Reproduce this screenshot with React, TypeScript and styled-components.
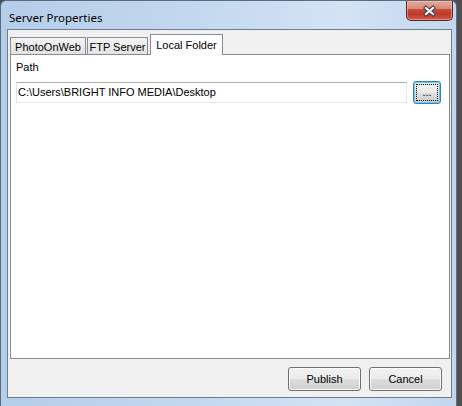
import React from "react";
import styled, { createGlobalStyle } from "styled-components";

const GlobalStyle = createGlobalStyle`
  html, body { margin: 0; padding: 0; }
  body {
    background: #4e4f52;
    overflow: hidden;
    font-family: "Liberation Sans", Arial, sans-serif;
  }
  * { box-sizing: border-box; }
`;

const Window = styled.div`
  width: 457px;
  height: 406px;
  border: 1px solid #5d6b7b;
  border-bottom: none;
  border-radius: 6px 6px 0 0;
  background: linear-gradient(to right, #b4cde8 0%, #c4d9ef 45%, #d3e3f4 75%, #c2d7ee 100%);
  padding: 0 4px 8px 6px;
  display: flex;
  flex-direction: column;
`;

const TitleBar = styled.div`
  height: 28px;
  display: flex;
  align-items: flex-start;
  padding-left: 2px;
  margin-right: -1px;
`;

const TitleText = styled.div`
  font-family: "Noto Sans", "Open Sans", sans-serif;
  font-size: 11.5px;
  line-height: 16px;
  padding-top: 9px;
  color: #000;
  flex: 1;
`;

const CloseButton = styled.div`
  width: 47px;
  height: 20px;
  border: 1px solid #4d2a2a;
  border-top: none;
  border-radius: 0 0 5px 5px;
  background: linear-gradient(#e6a897 0%, #d88a78 40%, #c5493a 45%, #c0392b 70%, #d35a45 100%);
  box-shadow: inset 0 0 0 1px rgba(255, 210, 200, 0.45);
  display: flex;
  align-items: center;
  justify-content: center;
`;

const Client = styled.div`
  flex: 1;
  background: #f0f0f0;
  border: 1px solid #6d7c8e;
  display: flex;
  flex-direction: column;
  padding: 4px 1px 6px 2px;
`;

const TabStrip = styled.div`
  height: 20px;
  display: flex;
  align-items: flex-end;
  position: relative;
  z-index: 1;
`;

const Tab = styled.div<{ $w: number; $active?: boolean; $gap: number }>`
  width: ${(p) => p.$w}px;
  margin-left: ${(p) => p.$gap}px;
  height: ${(p) => (p.$active ? 21 : 17)}px;
  margin-bottom: ${(p) => (p.$active ? -1 : 0)}px;
  border: 1px solid #898c95;
  border-bottom: none;
  background: ${(p) =>
    p.$active ? "#ffffff" : "linear-gradient(#f3f3f3 0%, #ebebeb 50%, #e3e3e3 100%)"};
  font-size: 11px;
  line-height: 13px;
  color: #000;
  padding-top: ${(p) => (p.$active ? 4 : 3)}px;
  text-align: center;
  white-space: nowrap;
`;

const Panel = styled.div`
  flex: 1;
  background: #fff;
  border: 1px solid #898c95;
  display: flex;
  flex-direction: column;
  gap: 7px;
  padding: 6px 8px 0 5px;
`;

const Label = styled.div`
  font-size: 11px;
  line-height: 13px;
  color: #000;
`;

const Row = styled.div`
  display: flex;
  align-items: center;
  gap: 6px;
`;

const PathInput = styled.div`
  flex: 1;
  height: 21px;
  border: 1px solid #e3e9ef;
  border-top-color: #abadb3;
  border-left-color: #e2e3ea;
  background: #fff;
  font-size: 11px;
  line-height: 19px;
  padding-left: 1px;
  color: #000;
  white-space: nowrap;
`;

const Button = styled.div<{ $w: number; $h: number; $focused?: boolean }>`
  width: ${(p) => p.$w}px;
  height: ${(p) => p.$h}px;
  border: 1px solid ${(p) => (p.$focused ? "#3c7fb1" : "#707070")};
  border-radius: 3px;
  background: linear-gradient(#f2f2f2 0%, #ebebeb 50%, #dddddd 51%, #cfcfcf 100%);
  box-shadow: inset 0 0 0 1px ${(p) => (p.$focused ? "#5ecdf7" : "#fbfbfb")};
  font-size: 11px;
  color: #000;
  display: flex;
  align-items: center;
  justify-content: center;
  padding: 2px;
`;

const FocusRect = styled.div`
  width: 100%;
  height: 100%;
  border: 1px dotted #000;
  display: flex;
  align-items: center;
  justify-content: center;
  font-size: 11px;
  line-height: 11px;
  padding-bottom: 1px;
`;

const Footer = styled.div`
  display: flex;
  justify-content: flex-end;
  gap: 8px;
  padding: 8px 8px 0 0;
`;

const tabs = [
  { label: "PhotoOnWeb", w: 76, gap: 0 },
  { label: "FTP Server", w: 61, gap: 1 },
  { label: "Local Folder", w: 73, gap: 2, active: true },
];

export default function App() {
  return (
    <>
      <GlobalStyle />
      <Window>
        <TitleBar>
          <TitleText>Server Properties</TitleText>
          <CloseButton>
            <svg width="15" height="12" viewBox="0 0 15 12">
              <path
                d="M4 3 L11 9 M11 3 L4 9"
                stroke="#3b3b4a"
                strokeWidth="4.2"
                strokeLinecap="square"
              />
              <path
                d="M4 3 L11 9 M11 3 L4 9"
                stroke="#ffffff"
                strokeWidth="2.2"
                strokeLinecap="square"
              />
            </svg>
          </CloseButton>
        </TitleBar>
        <Client>
          <TabStrip>
            {tabs.map((t) => (
              <Tab key={t.label} $w={t.w} $gap={t.gap} $active={t.active}>
                {t.label}
              </Tab>
            ))}
          </TabStrip>
          <Panel>
            <Label>Path</Label>
            <Row>
              <PathInput>C:\Users\BRIGHT INFO MEDIA\Desktop</PathInput>
              <Button $w={28} $h={23} $focused>
                <FocusRect>...</FocusRect>
              </Button>
            </Row>
          </Panel>
          <Footer>
            <Button $w={73} $h={24}>Publish</Button>
            <Button $w={73} $h={24}>Cancel</Button>
          </Footer>
        </Client>
      </Window>
    </>
  );
}
